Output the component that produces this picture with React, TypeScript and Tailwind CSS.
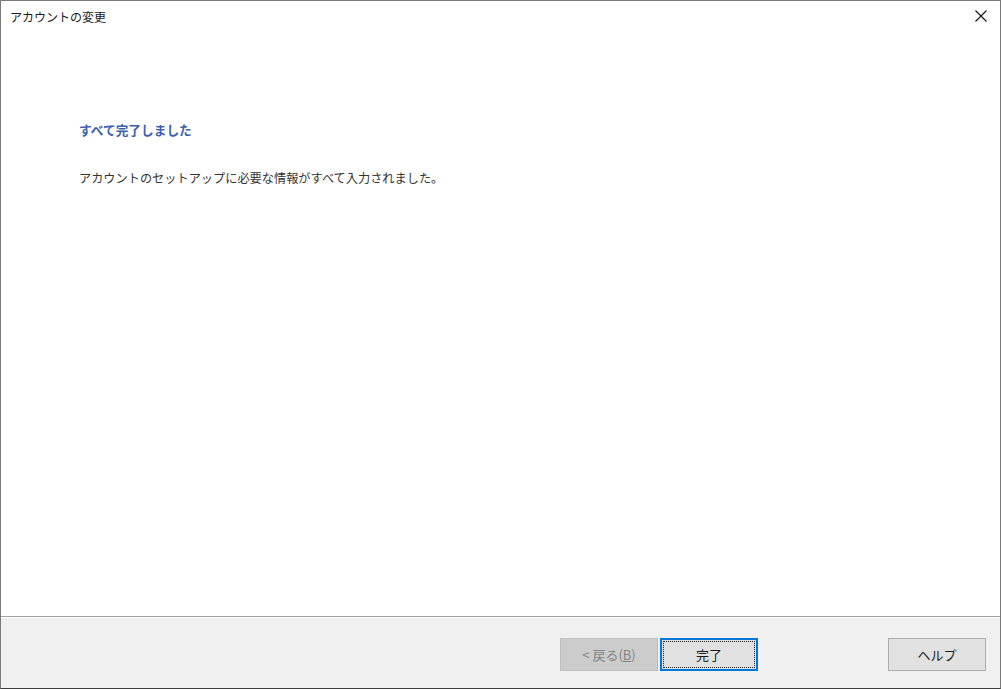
import React from 'react'

const font = { fontFamily: '"Noto Sans CJK JP", "Noto Sans", sans-serif' }

export default function App() {
  return (
    <div
      className="flex h-[689px] w-[1001px] flex-col border border-[#7a7a7a] border-b-[#3c3c3c] bg-white text-[#1a1a1a]"
      style={font}
    >
      {/* Title bar */}
      <div className="flex h-[31px] shrink-0 items-center justify-between pl-[9px] pr-[13px]">
        <span className="text-[12px] leading-none">アカウントの変更</span>
        <svg width="12" height="12" viewBox="0 0 12 12" className="mt-[-1px]">
          <path d="M0.5 0.5 L11.5 11.5 M11.5 0.5 L0.5 11.5" stroke="#111" strokeWidth="1.1" fill="none" />
        </svg>
      </div>

      {/* Content */}
      <div className="flex-1 pl-[78px] pt-[89px]">
        <h1 className="text-[12.7px] font-bold leading-[18px] text-[#3e5fae]">すべて完了しました</h1>
        <p className="mt-[30px] text-[12.2px] leading-[18px] text-[#333]">
          アカウントのセットアップに必要な情報がすべて入力されました。
        </p>
      </div>

      {/* Footer */}
      <div className="h-[72px] shrink-0 border-t border-[#a0a0a0] bg-[#f0f0f0] shadow-[inset_0_1px_0_#ffffff]">
        <div className="flex items-center pl-[559px] pt-[21px]">
          <button
            type="button"
            disabled
            className="flex h-[33px] w-[98px] items-center justify-center border border-[#bfbfbf] bg-[#cccccc] text-[13px] text-[#838383]"
          >
            &lt;&nbsp;戻る(<span className="underline">B</span>)
          </button>
          <button
            type="button"
            className="ml-[2px] flex h-[33px] w-[98px] items-center justify-center border-2 border-[#0078d7] bg-[#e1e1e1] p-px text-[13px] text-[#1a1a1a]"
          >
            <span className="flex h-full w-full items-center justify-center border border-dotted border-[#222]">完了</span>
          </button>
          <button
            type="button"
            className="ml-[130px] flex h-[33px] w-[98px] items-center justify-center border border-[#adadad] bg-[#e1e1e1] text-[13px] text-[#1a1a1a]"
          >
            ヘルプ
          </button>
        </div>
      </div>
    </div>
  )
}
